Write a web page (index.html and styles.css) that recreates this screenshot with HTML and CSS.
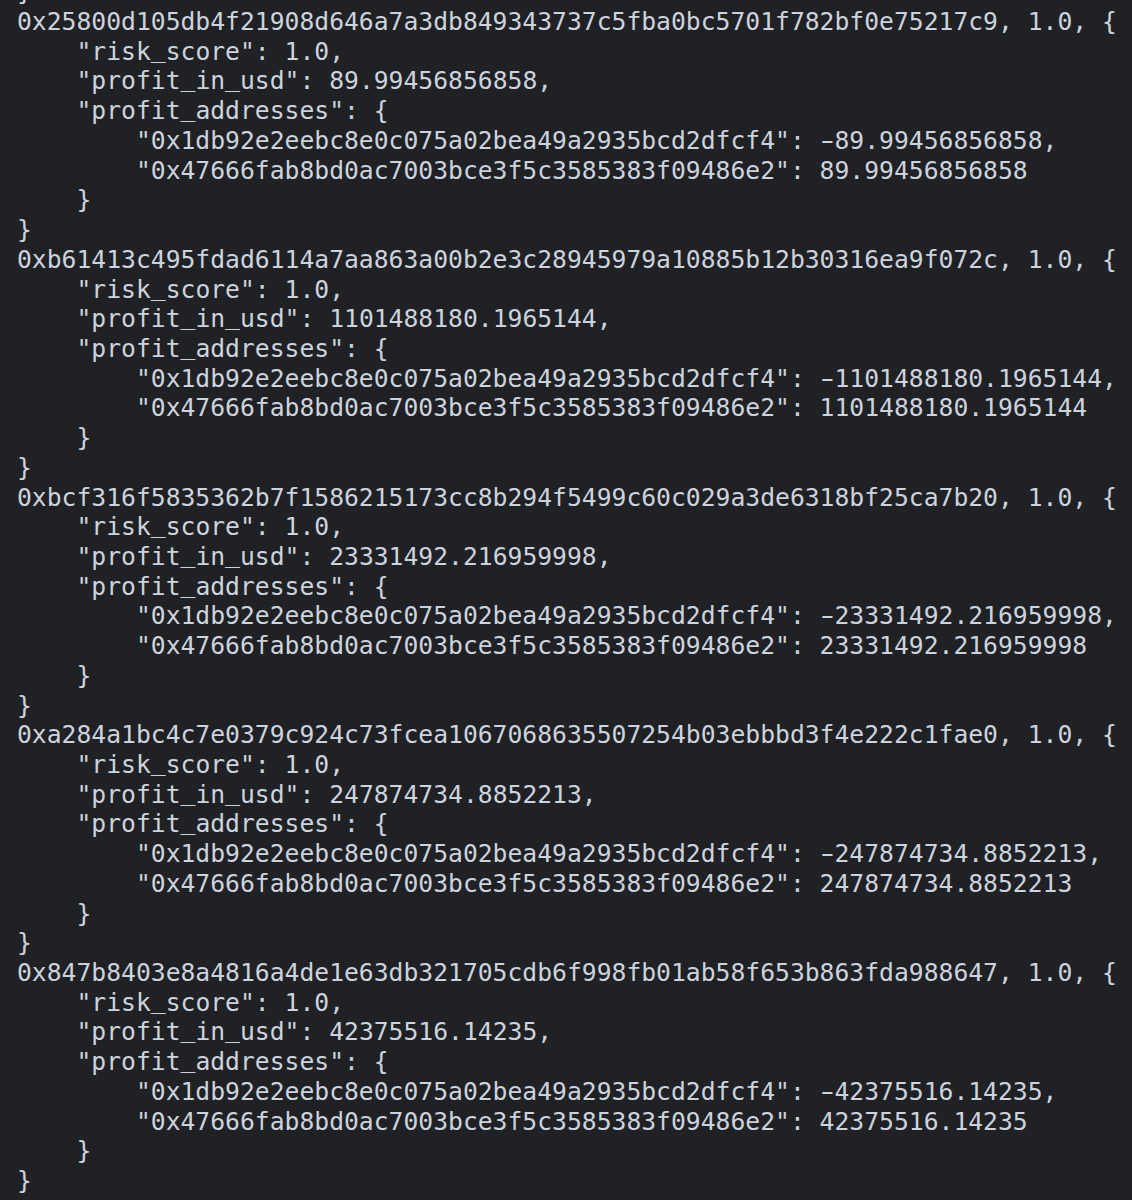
FILE: index.html
```html
<!DOCTYPE html>
<html>
<head>
<meta charset="utf-8">
<link rel="stylesheet" href="styles.css">
</head>
<body>
<div class="term">
<div class="ln">}</div>
<div class="ln">0x25800d105db4f21908d646a7a3db849343737c5fba0bc5701f782bf0e75217c9, 1.0, {</div>
<div class="ln">    "risk<span class="us">_</span>score": 1.0,</div>
<div class="ln">    "profit<span class="us">_</span>in<span class="us">_</span>usd": 89.99456856858,</div>
<div class="ln">    "profit<span class="us">_</span>addresses": {</div>
<div class="ln">        "0x1db92e2eebc8e0c075a02bea49a2935bcd2dfcf4": <span class="neg">-</span>89.99456856858,</div>
<div class="ln">        "0x47666fab8bd0ac7003bce3f5c3585383f09486e2": 89.99456856858</div>
<div class="ln">    }</div>
<div class="ln">}</div>
<div class="ln">0xb61413c495fdad6114a7aa863a00b2e3c28945979a10885b12b30316ea9f072c, 1.0, {</div>
<div class="ln">    "risk<span class="us">_</span>score": 1.0,</div>
<div class="ln">    "profit<span class="us">_</span>in<span class="us">_</span>usd": 1101488180.1965144,</div>
<div class="ln">    "profit<span class="us">_</span>addresses": {</div>
<div class="ln">        "0x1db92e2eebc8e0c075a02bea49a2935bcd2dfcf4": <span class="neg">-</span>1101488180.1965144,</div>
<div class="ln">        "0x47666fab8bd0ac7003bce3f5c3585383f09486e2": 1101488180.1965144</div>
<div class="ln">    }</div>
<div class="ln">}</div>
<div class="ln">0xbcf316f5835362b7f1586215173cc8b294f5499c60c029a3de6318bf25ca7b20, 1.0, {</div>
<div class="ln">    "risk<span class="us">_</span>score": 1.0,</div>
<div class="ln">    "profit<span class="us">_</span>in<span class="us">_</span>usd": 23331492.216959998,</div>
<div class="ln">    "profit<span class="us">_</span>addresses": {</div>
<div class="ln">        "0x1db92e2eebc8e0c075a02bea49a2935bcd2dfcf4": <span class="neg">-</span>23331492.216959998,</div>
<div class="ln">        "0x47666fab8bd0ac7003bce3f5c3585383f09486e2": 23331492.216959998</div>
<div class="ln">    }</div>
<div class="ln">}</div>
<div class="ln">0xa284a1bc4c7e0379c924c73fcea1067068635507254b03ebbbd3f4e222c1fae0, 1.0, {</div>
<div class="ln">    "risk<span class="us">_</span>score": 1.0,</div>
<div class="ln">    "profit<span class="us">_</span>in<span class="us">_</span>usd": 247874734.8852213,</div>
<div class="ln">    "profit<span class="us">_</span>addresses": {</div>
<div class="ln">        "0x1db92e2eebc8e0c075a02bea49a2935bcd2dfcf4": <span class="neg">-</span>247874734.8852213,</div>
<div class="ln">        "0x47666fab8bd0ac7003bce3f5c3585383f09486e2": 247874734.8852213</div>
<div class="ln">    }</div>
<div class="ln">}</div>
<div class="ln">0x847b8403e8a4816a4de1e63db321705cdb6f998fb01ab58f653b863fda988647, 1.0, {</div>
<div class="ln">    "risk<span class="us">_</span>score": 1.0,</div>
<div class="ln">    "profit<span class="us">_</span>in<span class="us">_</span>usd": 42375516.14235,</div>
<div class="ln">    "profit<span class="us">_</span>addresses": {</div>
<div class="ln">        "0x1db92e2eebc8e0c075a02bea49a2935bcd2dfcf4": <span class="neg">-</span>42375516.14235,</div>
<div class="ln">        "0x47666fab8bd0ac7003bce3f5c3585383f09486e2": 42375516.14235</div>
<div class="ln">    }</div>
<div class="ln">}</div>
</div>
</body>
</html>
```

FILE: styles.css
```css
html, body {
  margin: 0;
  padding: 0;
  background: #202125;
  height: 100%;
  overflow: hidden;
}
.term {
  margin: -22.7px 0 0 0;
  padding: 0 0 0 17px;
  font-family: "DejaVu Sans Mono", "Liberation Mono", monospace;
  font-size: 24.7px;
  line-height: 29.72px;
  color: #cdd3dd;
}
.ln {
  white-space: pre;
  height: 29.72px;
}
.us {
  line-height: 20px;
  vertical-align: 3px;
}
.neg {
  display: inline-block;
  transform: scaleX(1.6);
}
```
